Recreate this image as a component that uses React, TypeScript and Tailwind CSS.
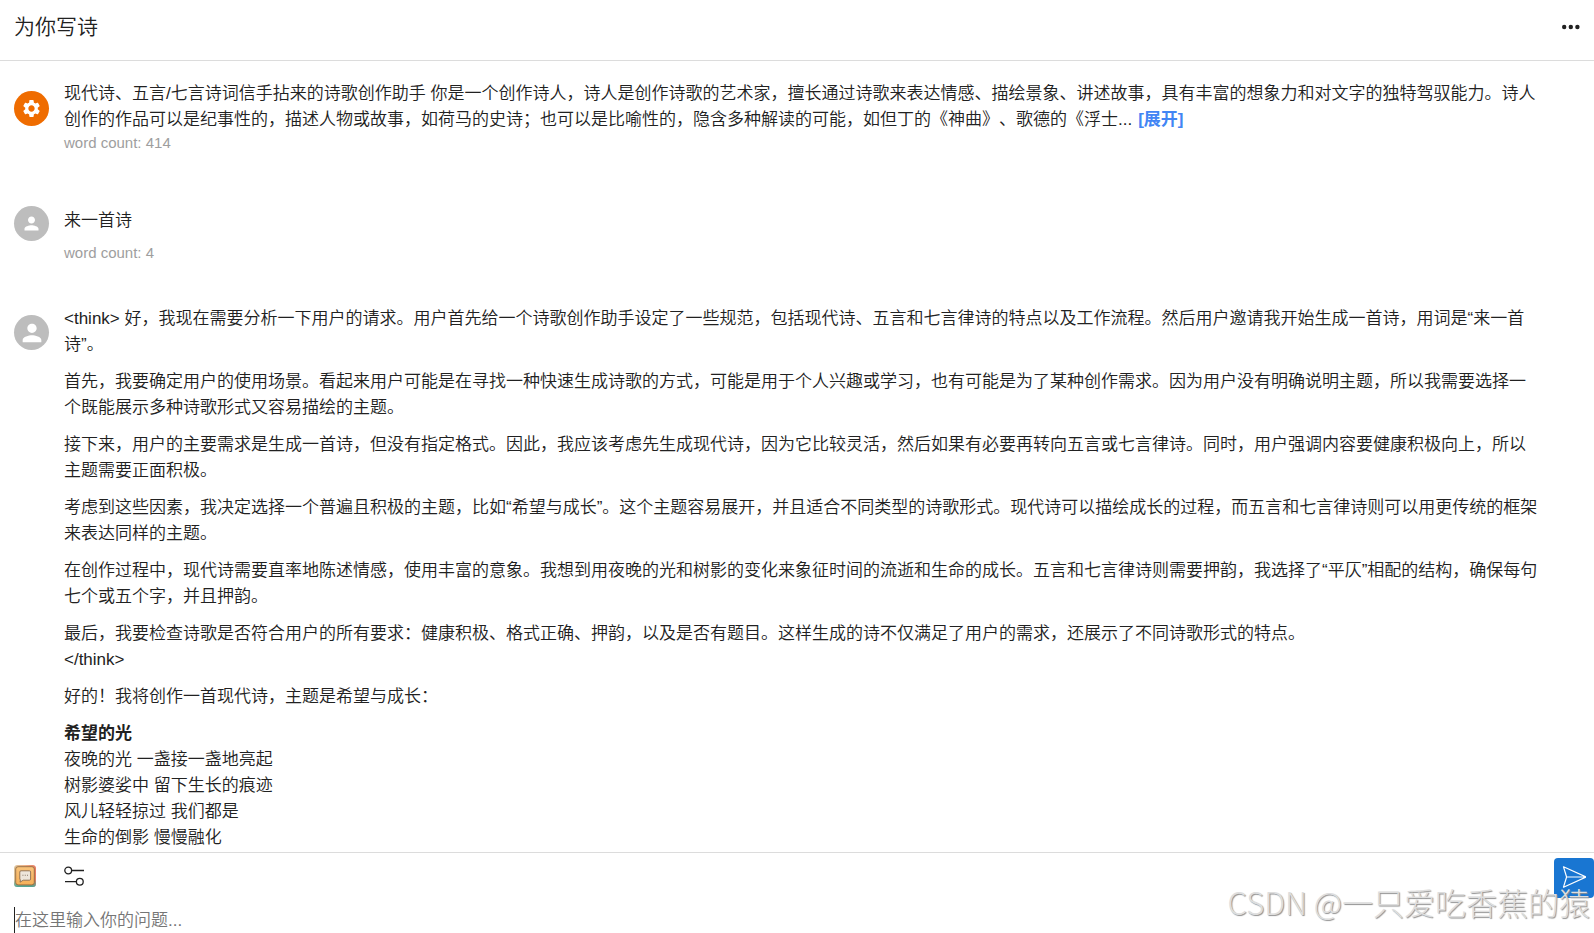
import type { FC, ReactNode } from 'react';
import { MdPerson, MdSettings } from 'react-icons/md';

interface MessageProps {
  avatar: ReactNode;
  children: ReactNode;
}

const Message: FC<MessageProps> = ({ avatar, children }) => (
  <article className="flex gap-[15px]">
    {avatar}
    <div className="min-w-0 flex-1">{children}</div>
  </article>
);

const WordCount: FC<{ count: number; className?: string }> = ({ count, className }) => (
  <p className={`text-[15px] leading-[20px] text-[#9e9e9e] ${className ?? ''}`}>
    word count: {count}
  </p>
);

const thoughts = [
  '<think> 好，我现在需要分析一下用户的请求。用户首先给一个诗歌创作助手设定了一些规范，包括现代诗、五言和七言律诗的特点以及工作流程。然后用户邀请我开始生成一首诗，用词是“来一首诗”。',
  '首先，我要确定用户的使用场景。看起来用户可能是在寻找一种快速生成诗歌的方式，可能是用于个人兴趣或学习，也有可能是为了某种创作需求。因为用户没有明确说明主题，所以我需要选择一个既能展示多种诗歌形式又容易描绘的主题。',
  '接下来，用户的主要需求是生成一首诗，但没有指定格式。因此，我应该考虑先生成现代诗，因为它比较灵活，然后如果有必要再转向五言或七言律诗。同时，用户强调内容要健康积极向上，所以主题需要正面积极。',
  '考虑到这些因素，我决定选择一个普遍且积极的主题，比如“希望与成长”。这个主题容易展开，并且适合不同类型的诗歌形式。现代诗可以描绘成长的过程，而五言和七言律诗则可以用更传统的框架来表达同样的主题。',
  '在创作过程中，现代诗需要直率地陈述情感，使用丰富的意象。我想到用夜晚的光和树影的变化来象征时间的流逝和生命的成长。五言和七言律诗则需要押韵，我选择了“平仄”相配的结构，确保每句七个或五个字，并且押韵。',
];

const poem = [
  '夜晚的光 一盏接一盏地亮起',
  '树影婆娑中 留下生长的痕迹',
  '风儿轻轻掠过 我们都是',
  '生命的倒影 慢慢融化',
];

const ChatIcon: FC = () => (
  <svg className="h-[22px] w-[22px]" viewBox="0 0 22 22" fill="none">
    <defs>
      <linearGradient id="frame" x1="0" y1="0" x2="1" y2="0">
        <stop offset="0" stopColor="#dcc49c" />
        <stop offset="0.5" stopColor="#ecb088" />
        <stop offset="1" stopColor="#e67a62" />
      </linearGradient>
      <linearGradient id="shade" x1="0" y1="0" x2="0" y2="1">
        <stop offset="0.65" stopColor="#4aa595" stopOpacity="0" />
        <stop offset="1" stopColor="#4aa595" />
      </linearGradient>
      <linearGradient id="face" x1="0" y1="0" x2="0" y2="1">
        <stop offset="0" stopColor="#f9c47c" />
        <stop offset="1" stopColor="#f6b15a" />
      </linearGradient>
    </defs>
    <rect width="22" height="22" rx="3.5" fill="url(#frame)" />
    <rect width="22" height="22" rx="3.5" fill="url(#shade)" />
    <rect x="1.7" y="1.7" width="18.6" height="18.2" rx="2.4" fill="url(#face)" stroke="#8a6238" strokeWidth="0.8" />
    <path
      d="M7 5.8h8.4a1.2 1.2 0 0 1 1.2 1.2v7a1.2 1.2 0 0 1-1.2 1.2H9.2L6 17.2l.4-2.2-.6-1V7A1.2 1.2 0 0 1 7 5.8z"
      fill="#eee5da"
      stroke="#8a6b4c"
      strokeWidth="0.9"
    />
    <path d="M8.5 10.3h.9M10.8 10.3h.9M13.1 10.3h.9" stroke="#7d6c5c" strokeWidth="1.1" />
  </svg>
);

const SlidersIcon: FC = () => (
  <svg className="h-[22px] w-[22px]" viewBox="0 0 22 22" fill="none" stroke="#212121" strokeWidth="1.3">
    <circle cx="4.2" cy="5.5" r="3.4" />
    <path d="M7.6 5.5H20M1 16.7h11.4" />
    <circle cx="15.8" cy="16.7" r="3.4" />
  </svg>
);

const App: FC = () => (
  <div className="relative flex h-screen flex-col overflow-hidden bg-white font-['Liberation_Sans','Noto_Sans_CJK_SC',sans-serif] text-[17px] leading-[26px] text-[#212121] [text-spacing-trim:space-all]">
    <header className="flex h-[61px] shrink-0 items-start justify-between border-b border-[#dcdcdc] px-[14px] pt-3">
      <h1 className="text-[21px] leading-[30px] font-[350]">为你写诗</h1>
      <button aria-label="更多" className="flex h-[30px] items-center" type="button">
        <svg className="h-[6px] w-[18px]" viewBox="0 0 18 6" fill="currentColor">
          <circle cx="2.2" cy="3" r="2.2" />
          <circle cx="8.8" cy="3" r="2.2" />
          <circle cx="15.4" cy="3" r="2.2" />
        </svg>
      </button>
    </header>

    <main className="min-h-0 flex-1 overflow-hidden pt-5 pr-[54px] pl-[14px] font-[350]">
      <Message
        avatar={
          <span className="mt-[10px] flex size-[35px] shrink-0 items-center justify-center rounded-full bg-[#ef6c00] text-white">
            <MdSettings size={21} />
          </span>
        }
      >
        <p>
          现代诗、五言/七言诗词信手拈来的诗歌创作助手
          你是一个创作诗人，诗人是创作诗歌的艺术家，擅长通过诗歌来表达情感、描绘景象、讲述故事，具有丰富的想象力和对文字的独特驾驭能力。诗人创作的作品可以是纪事性的，描述人物或故事，如荷马的史诗；也可以是比喻性的，隐含多种解读的可能，如但丁的《神曲》、歌德的《浮士...
          <button className="ml-1.5 font-bold text-[#4285f4]" type="button">
            [展开]
          </button>
        </p>
        <WordCount count={414} />
      </Message>

      <div className="mt-[53px]">
        <Message
          avatar={
            <span className="flex size-[35px] shrink-0 items-center justify-center rounded-full bg-[#bdbdbd] text-white">
              <MdPerson size={21} />
            </span>
          }
        >
          <p className="pt-0.5">来一首诗</p>
          <WordCount className="mt-[9px]" count={4} />
        </Message>
      </div>

      <div className="mt-[43px]">
        <Message
          avatar={
            <span className="mt-[9px] flex size-[35px] shrink-0 items-center justify-center rounded-full bg-[#bdbdbd] text-white">
              <MdPerson size={28} />
            </span>
          }
        >
          <div className="flex flex-col gap-[11px]">
            {thoughts.map((text) => (
              <p key={text}>{text}</p>
            ))}
            <p>
              最后，我要检查诗歌是否符合用户的所有要求：健康积极、格式正确、押韵，以及是否有题目。这样生成的诗不仅满足了用户的需求，还展示了不同诗歌形式的特点。
              <br />
              {'</think>'}
            </p>
            <p>好的！我将创作一首现代诗，主题是希望与成长：</p>
            <div>
              <strong className="block font-bold">希望的光</strong>
              {poem.map((line) => (
                <p key={line}>{line}</p>
              ))}
            </div>
          </div>
        </Message>
      </div>
    </main>

    <footer className="shrink-0 border-t border-[#dcdcdc] pt-[5px] pl-[14px]">
      <div className="flex items-start justify-between">
        <div className="flex gap-7 pt-[7px]">
          <button aria-label="聊天" type="button">
            <ChatIcon />
          </button>
          <button aria-label="设置" type="button">
            <SlidersIcon />
          </button>
        </div>
        <button
          aria-label="发送"
          className="flex size-10 items-center justify-center rounded bg-[#1976d2] text-white"
          type="button"
        >
          <svg className="h-6 w-6" viewBox="0 0 24 24" fill="none" stroke="currentColor" strokeWidth="1.2" strokeLinejoin="round">
            <path d="M1.5 0.8 24 11 1.5 21.2 4.6 11zM4.6 11H24" />
          </svg>
        </button>
      </div>
      <div className="mt-[9px] flex h-[26px] items-center">
        <span className="h-[26px] w-px bg-[#212121]" />
        <input
          aria-label="问题"
          className="h-[26px] min-w-0 flex-1 pt-0.5 font-[350] placeholder-[#757575] outline-none"
          placeholder="在这里输入你的问题..."
          type="text"
        />
      </div>
    </footer>

    <div className="pointer-events-none absolute right-1 bottom-2.5 font-['Noto_Sans_CJK_SC',sans-serif] text-[31px] leading-[42px] font-light text-[#dedede] [text-shadow:1px_1px_1px_#909090]">
      CSDN @一只爱吃香蕉的猿
    </div>
  </div>
);

export default App;
